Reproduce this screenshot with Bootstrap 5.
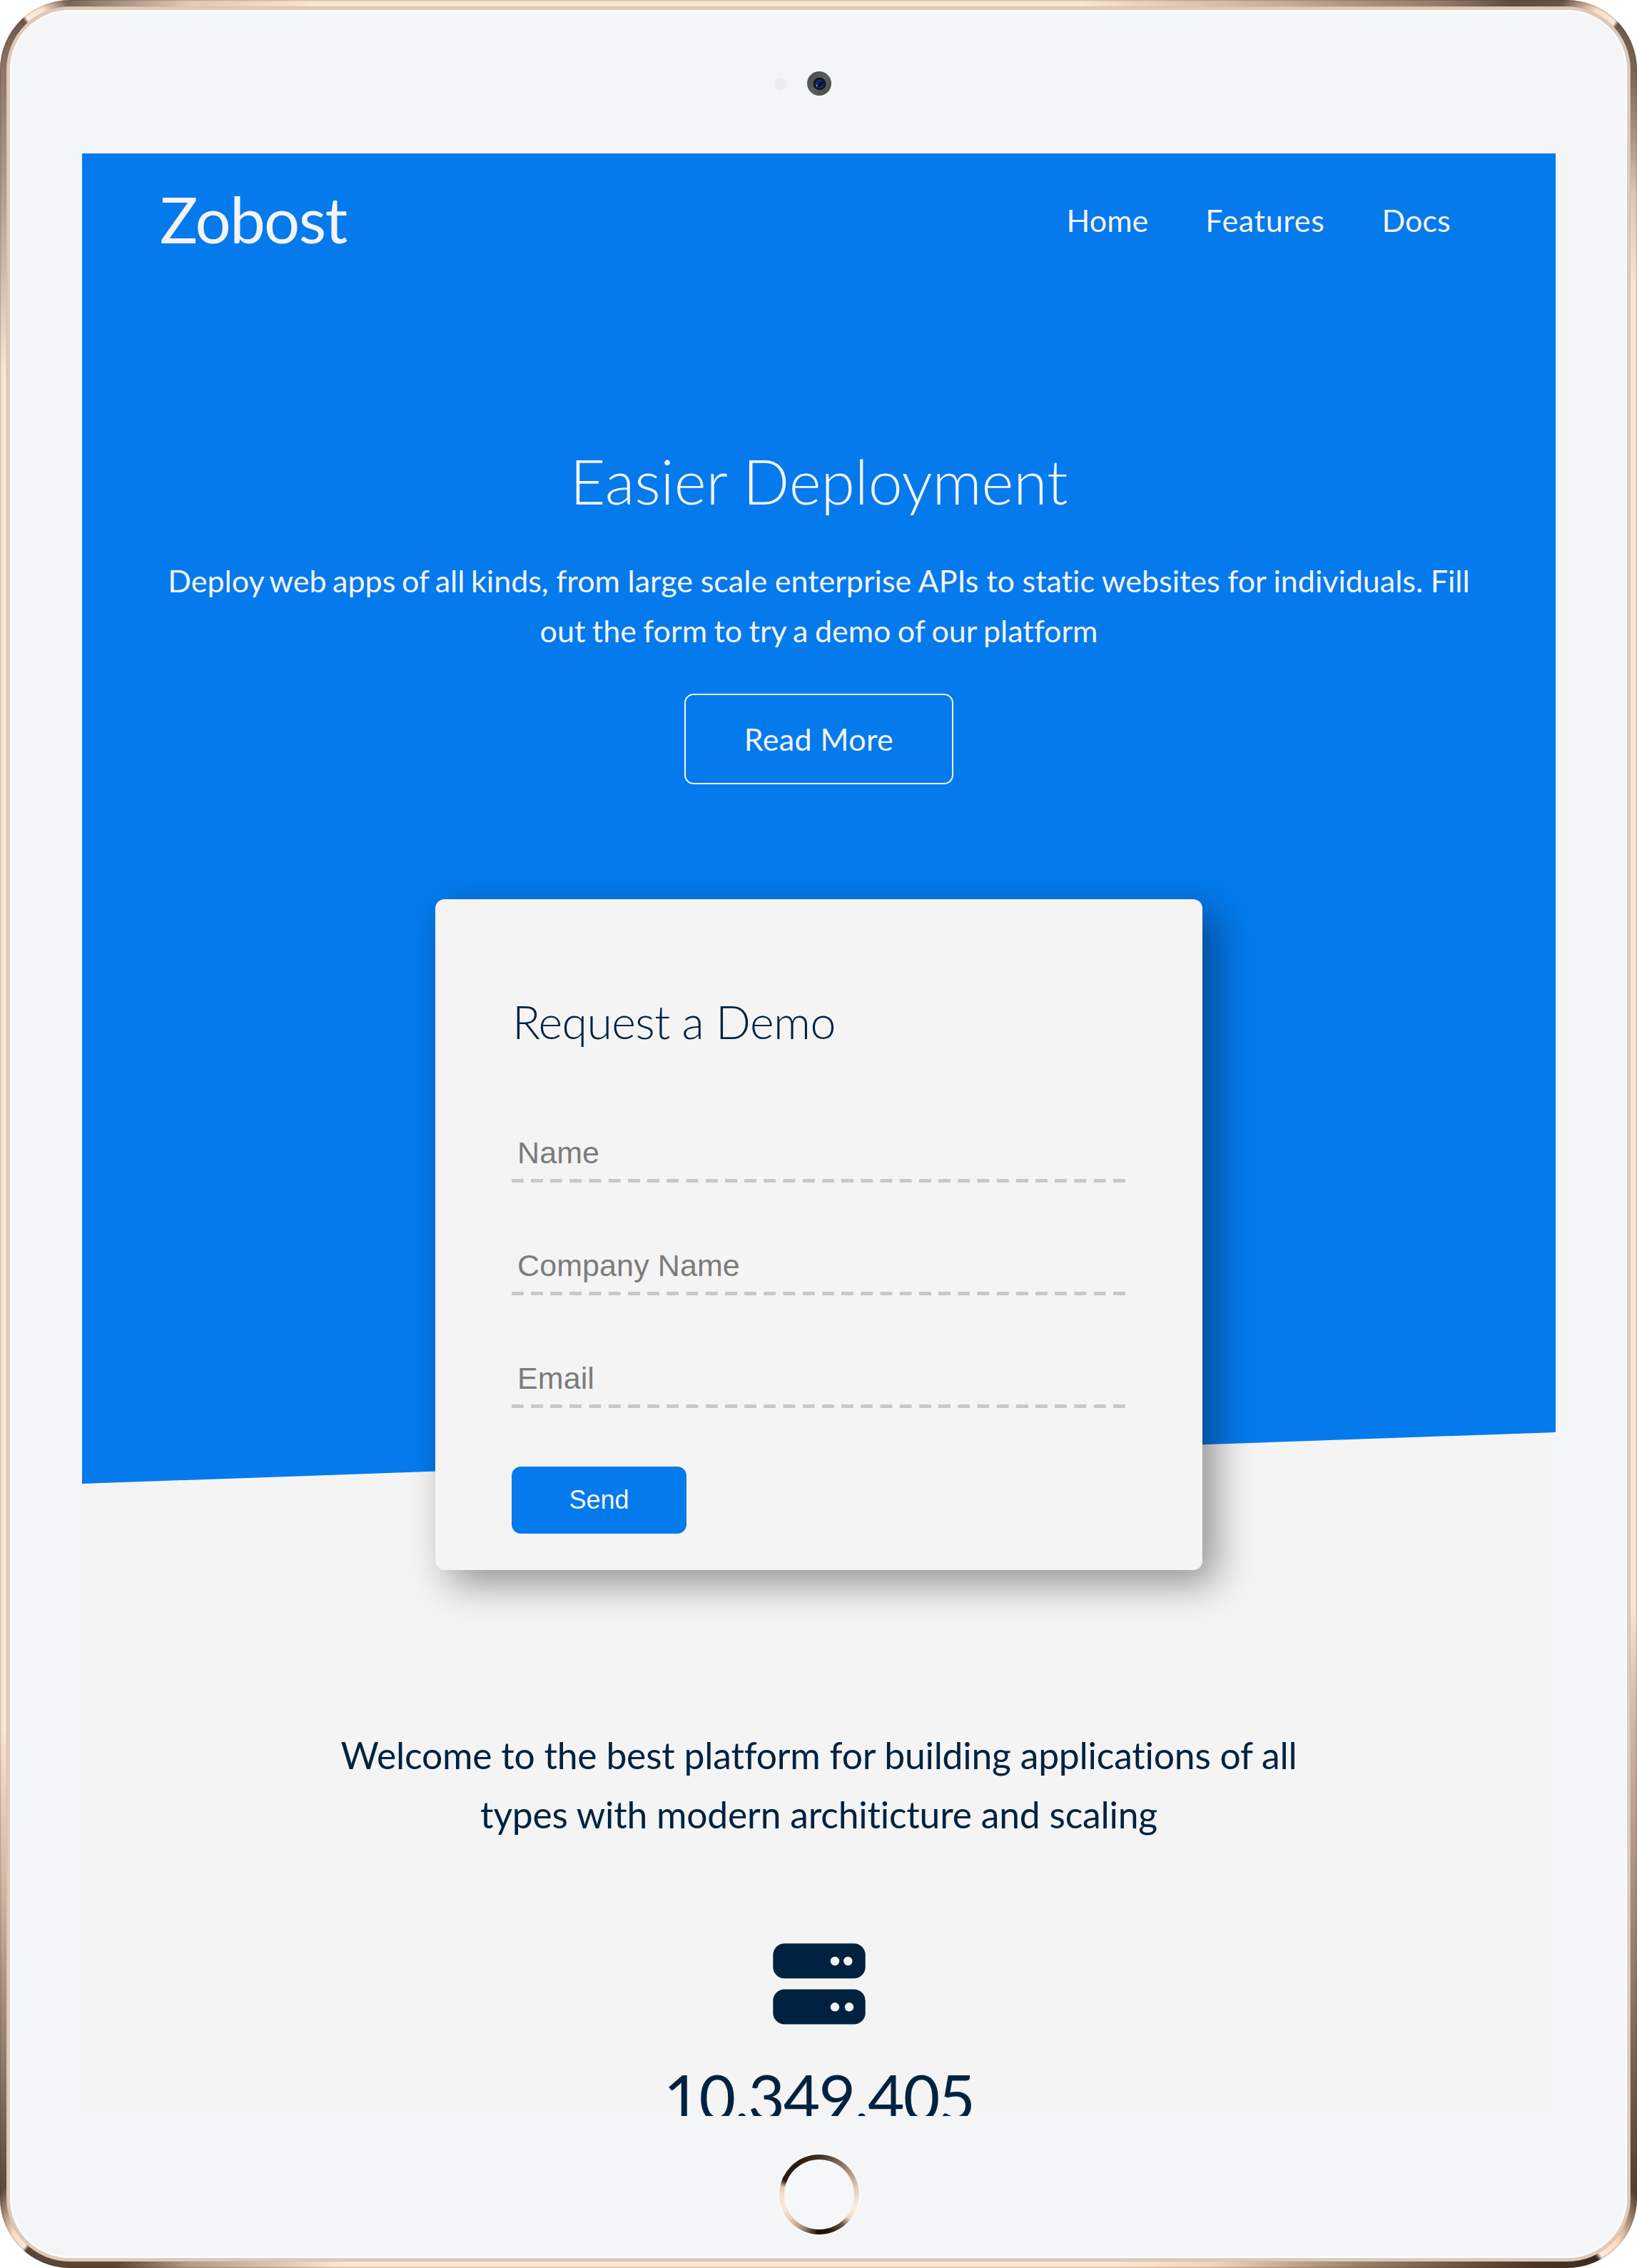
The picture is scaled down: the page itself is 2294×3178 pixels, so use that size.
<!DOCTYPE html>
<html lang="en">
<head>
<meta charset="utf-8">
<meta name="viewport" content="width=device-width, initial-scale=1">
<title>Zobost</title>
<link href="https://cdn.jsdelivr.net/npm/bootstrap@5.3.0/dist/css/bootstrap.min.css" rel="stylesheet">
<style>
:root{--zb-blue:#047aed;--zb-navy:#002240;--zb-light:#f4f4f4;--bezel:#f3f5f7}
body{background:#fff;font-family:Lato,sans-serif;font-size:43px;color:var(--zb-navy);font-variant-ligatures:none}
/* metallic tablet shell */
.shell{width:2294px;height:3178px;border-radius:98px;padding:9px;box-shadow:inset 0 0 3px rgba(60,40,25,.55);
background:conic-gradient(#fbe5d3 0deg,#fbe5d3 13deg,#c9ac99 22.3deg,#8f7767 29.2deg,#5f4c40 31.5deg,#6b5546 33.3deg,#ffdcc0 34.7deg,#ffe8d8 35.6deg,#6f5a4a 35.75deg,#7a6555 37.5deg,#b39c8c 39.5deg,#e3c6b4 41deg,#fbe5d3 44deg,#fbe5d3 120deg,#d8bba8 125deg,#b89a86 130.8deg,#8b7563 136.6deg,#53412f 142.4deg,#ffdcc0 144.2deg,#ffe8d8 145.1deg,#3a2a20 145.3deg,#4a3729 147.7deg,#9a8470 154.6deg,#f0d6c0 160.8deg,#fbe5d3 165deg,#fbe5d3 203deg,#b09a88 209.2deg,#5a4636 211.9deg,#5a4636 215.35deg,#ffe8d8 215.5deg,#ffdcc0 216.2deg,#5f4a3b 217.7deg,#8a7564 220.8deg,#d0b4a0 227deg,#fbe5d3 234deg,#fbe5d3 313deg,#b09a89 319.4deg,#8d7665 322.6deg,#6b5546 324.5deg,#fdeee0 324.65deg,#ffe0c8 325.4deg,#7a6555 326.4deg,#a08a7a 327.9deg,#e3c8b6 330.8deg,#fbe5d3 336deg,#fbe5d3 360deg)}
.shell-lip{height:3160px;border-radius:89px;padding:5px;background:#dfcaba;box-shadow:inset 0 0 2px #c9ad9b}
.bezel{height:3150px;border-radius:84px;background:var(--bezel);box-shadow:inset 0 0 2px 2px #fff}
.bezel-top{height:201px;padding-top:4px}
.bezel-bottom{height:199px;padding-top:38px}
.viewport{width:2065px;height:2750px;margin-left:101px;background:var(--zb-light)}
.home-key{width:112px;height:112px;margin-left:2px;padding:7px;box-shadow:0 0 3px 1px #fff;
background:conic-gradient(#403023 0deg,#5d4939 15deg,#9a8270 45deg,#e6cbb8 80deg,#ffeedd 110deg,#f2d8c3 128deg,#6a5648 142deg,#2a1408 165deg,#1f0e05 182deg,#a08a7a 205deg,#eacfba 230deg,#ffe8d6 250deg,#f7dfd0 270deg,#dfc4b4 282deg,#2a1a10 292deg,#2e1c10 330deg,#403023 360deg)}
.home-key span{width:98px;height:98px;background:#f5f7f9}
/* page */
.hero{isolation:isolate}
.hero::before{content:"";position:absolute;inset:0 0 auto 0;height:1864px;background:var(--zb-blue);clip-path:polygon(0 0,100% 0,100% 1792px,0 100%);z-index:-1}
.topbar{height:188px;padding:0 0 0 109px;color:var(--zb-light)}
.topbar .navbar-brand{font-size:88.5px;line-height:103px;letter-spacing:-1.6px;color:var(--zb-light);margin-top:-4px}
.topbar .navbar-nav{width:685.4px;gap:80px}
.topbar .navbar-nav .nav-link{color:var(--zb-light);padding:0;line-height:60px}
.topbar .wide-track{letter-spacing:.7px}
.hero h1{font-size:86px;font-weight:300;line-height:103px;letter-spacing:-.1px;margin-top:219px;color:var(--zb-light)}
.pitch{line-height:69.9px;word-spacing:-.3px;margin-top:54px;color:var(--zb-light)}
.pitch .tight-a{word-spacing:-2.4px}
.pitch .tight-b{word-spacing:-1.6px}
.btn-more{width:377px;height:127px;margin-top:53px;border:2.7px solid var(--zb-light);border-radius:13px;color:var(--zb-light);font-size:43px;letter-spacing:.4px}
.btn-more span{padding-top:2px}
.demo-card{width:1075px;height:940px;margin-top:161px;padding:132px 107px 0;border:0;border-radius:13px;background:var(--zb-light);box-shadow:19px 19px 54px rgba(0,0,0,.4)}
.demo-card h2{font-size:64.5px;font-weight:300;line-height:78px;letter-spacing:-.6px;margin:0 0 121.6px 1px;color:var(--zb-navy)}
.demo-card .form-control{font:43px/49px "Liberation Sans",Arial,sans-serif;letter-spacing:.1px;height:66.4px;padding:0 0 17.4px 8px;margin-bottom:91.6px;border:0;border-radius:0;
background:repeating-linear-gradient(90deg,#c8c8c8 0 16.3px,transparent 16.9px 26.6px,#c8c8c8 27.2px) left bottom/100% 5.4px no-repeat}
.demo-card .form-control::placeholder{color:#7c7c7c;opacity:1}
.demo-card .form-control:last-of-type{margin-bottom:81px}
.btn-send{width:245px;height:94px;border:0;border-radius:13px;background:var(--zb-blue);color:var(--zb-light);font:36px/1 "Liberation Sans",Arial,sans-serif}
.intro{font-size:51.6px;line-height:83px;letter-spacing:-.2px;margin-top:218px}
.stat-icon{width:130px;height:114px;margin-top:139px}
.stat-num{font-size:89px;line-height:103px;letter-spacing:-2px;margin-top:49px}
</style>
</head>
<body>
<div class="shell">
<div class="shell-lip">
<div class="bezel d-flex flex-column">
  <div class="bezel-top d-flex justify-content-center align-items-center flex-shrink-0">
    <svg width="150" height="44" viewBox="0 0 150 44" aria-hidden="true">
      <defs>
        <linearGradient id="rim" x1="0" y1="0" x2="1" y2="1"><stop offset="0" stop-color="#4a4a4a"/><stop offset=".5" stop-color="#5c5c5c"/><stop offset="1" stop-color="#484848"/></linearGradient>
        <radialGradient id="lens"><stop offset="0" stop-color="#071335"/><stop offset=".55" stop-color="#0c3a8c"/><stop offset=".8" stop-color="#082252"/><stop offset="1" stop-color="#151515"/></radialGradient>
      </defs>
      <circle cx="21.7" cy="22.5" r="9" fill="#ebecee"/>
      <circle cx="76" cy="22" r="17" fill="url(#rim)"/>
      <circle cx="76.5" cy="22.5" r="9" fill="#171717"/>
      <circle cx="76.5" cy="22.8" r="7.4" fill="url(#lens)"/>
      <path d="M72 26l7-7 4 1-6 7z" fill="#050d26"/>
      <circle cx="72.8" cy="25" r="1" fill="#a9c4ee"/>
    </svg>
  </div>
  <div class="viewport overflow-hidden flex-shrink-0">
    <section class="hero position-relative d-flex flex-column align-items-center">
      <nav class="topbar navbar navbar-expand d-flex justify-content-between align-items-center w-100">
        <a class="navbar-brand me-0 p-0" href="#">Zobost</a>
        <div class="navbar-nav flex-row">
          <a class="nav-link" href="#">Home</a>
          <a class="nav-link wide-track" href="#">Features</a>
          <a class="nav-link" href="#">Docs</a>
        </div>
      </nav>
      <h1 class="mb-0 text-center">Easier Deployment</h1>
      <p class="pitch mb-0 text-center"><span class="tight-a">Deploy web apps of all kinds,</span> from large scale enterprise APIs to static websites for individuals. Fill<br><span class="tight-b">out the form to try a demo of our platform</span></p>
      <a class="btn btn-more d-flex align-items-center justify-content-center p-0" href="#"><span>Read More</span></a>
      <form class="card demo-card d-block">
        <h2>Request a Demo</h2>
        <input class="form-control" type="text" placeholder="Name">
        <input class="form-control" type="text" placeholder="Company Name">
        <input class="form-control" type="email" placeholder="Email">
        <button class="btn btn-send d-flex align-items-center justify-content-center p-0" type="button">Send</button>
      </form>
    </section>
    <section class="d-flex flex-column align-items-center text-center">
      <p class="intro mb-0">Welcome to the best platform for building applications of all<br>types with modern architicture and scaling</p>
      <svg class="stat-icon flex-shrink-0" viewBox="0 0 130 114" aria-hidden="true">
        <g fill="#002240"><rect x=".3" y=".3" width="129.4" height="49" rx="16"/><rect x=".3" y="64.5" width="129.4" height="49" rx="16"/></g>
        <g fill="#f4f4f4"><circle cx="87" cy="25" r="6.2"/><circle cx="105.3" cy="25" r="6.2"/><circle cx="87" cy="89.3" r="6.2"/><circle cx="107" cy="89.3" r="6.2"/></g>
      </svg>
      <div class="stat-num">10.349.405</div>
    </section>
  </div>
  <div class="bezel-bottom d-flex justify-content-center flex-shrink-0">
    <div class="home-key rounded-circle mt-3"><span class="d-block rounded-circle"></span></div>
  </div>
</div>
</div>
</div>
<script src="https://cdn.jsdelivr.net/npm/bootstrap@5.3.0/dist/js/bootstrap.bundle.min.js"></script>
</body>
</html>
